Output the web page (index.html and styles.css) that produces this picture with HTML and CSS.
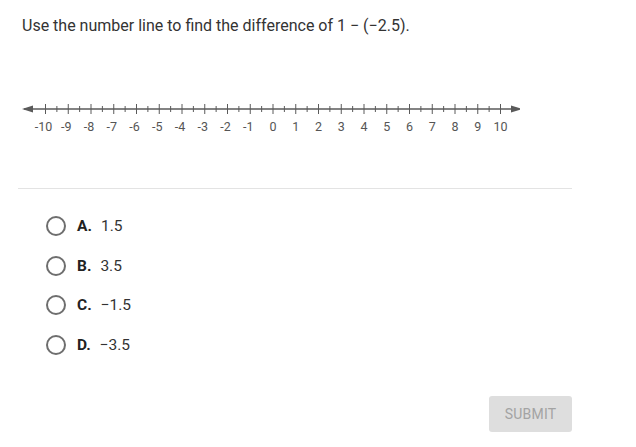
FILE: index.html
```html
<!DOCTYPE html>
<html>
<head>
<meta charset="utf-8">
<link rel="stylesheet" href="styles.css">
</head>
<body>
<div class="page">
  <p class="question">Use the number line to find the difference of 1 − (−2.5).</p>
  <div class="numberline">
    <svg width="520" height="40" viewBox="0 0 520 40" id="nl">
      <line x1="24" y1="9" x2="516" y2="9" stroke="#5a5a5a" stroke-width="1.6"/>
      <polygon points="22,9 33,5.5 33,12.5" fill="#5a5a5a"/>
      <polygon points="522,9 511,5.5 511,12.5" fill="#5a5a5a"/>
      <g id="ticks" stroke="#5a5a5a" stroke-width="1"></g>
      <g id="labels" fill="#555" font-family="Roboto, sans-serif" font-size="12.5" text-anchor="middle"></g>
    </svg>
  </div>
  <hr class="divider">
  <div class="choices">
    <label class="choice"><span class="radio"></span><b>A.</b><span>1.5</span></label>
    <label class="choice"><span class="radio"></span><b>B.</b><span>3.5</span></label>
    <label class="choice"><span class="radio"></span><b>C.</b><span>−1.5</span></label>
    <label class="choice"><span class="radio"></span><b>D.</b><span>−3.5</span></label>
  </div>
  <div class="actions">
    <button class="submit">SUBMIT</button>
  </div>
</div>
<script src="script.js"></script>
</body>
</html>
```
FILE: script.js
```js
(function () {
  var ns = "http://www.w3.org/2000/svg";
  var ticks = document.getElementById("ticks");
  var labels = document.getElementById("labels");
  var x0 = 45.5, step = 22.75;
  for (var i = -10; i <= 10; i++) {
    var x = x0 + (i + 10) * step;
    var l = document.createElementNS(ns, "line");
    l.setAttribute("x1", x); l.setAttribute("x2", x);
    l.setAttribute("y1", 4); l.setAttribute("y2", 14);
    ticks.appendChild(l);
    var t = document.createElementNS(ns, "text");
    t.setAttribute("x", x - (i < 0 ? 2 : 0)); t.setAttribute("y", 31);
    t.textContent = String(i);
    labels.appendChild(t);
    if (i < 10) {
      var h = document.createElementNS(ns, "line");
      var hx = x + step / 2;
      h.setAttribute("x1", hx); h.setAttribute("x2", hx);
      h.setAttribute("y1", 6); h.setAttribute("y2", 12);
      ticks.appendChild(h);
    }
  }
})();
```
FILE: styles.css
```css
html, body {
  margin: 0;
  padding: 0;
  background: #fff;
}
.page {
  width: 636px;
  height: 447px;
  font-family: Roboto, "Liberation Sans", sans-serif;
  color: #333;
  position: relative;
}
.question {
  margin: 0;
  padding: 16px 0 0 22px;
  font-size: 16px;
  line-height: 20px;
}
.numberline {
  padding: 64px 0 0 0;
  height: 40px;
}
.numberline svg {
  display: block;
}
.divider {
  margin: 48px 64px 0 18px;
  border: 0;
  border-top: 1px solid #e3e3e3;
}
.choices {
  display: flex;
  flex-direction: column;
  gap: 19.6px;
  padding: 27px 0 0 46px;
}
.choice {
  display: flex;
  align-items: center;
  height: 20px;
  font-size: 15.5px;
  color: #333;
}
.radio {
  width: 16px;
  height: 16px;
  border: 2px solid #6e6e6e;
  border-radius: 50%;
  margin-right: 11px;
}
.choice b {
  font-weight: 700;
  margin-right: 9px;
  color: #222;
}
.actions {
  display: flex;
  justify-content: flex-end;
  padding: 41px 64px 0 0;
}
.submit {
  width: 83px;
  height: 36px;
  border: 0;
  border-radius: 3px;
  background: #dedede;
  color: #a3a3a3;
  font-family: Roboto, sans-serif;
  font-size: 14px;
  letter-spacing: 0.2px;
}
```
